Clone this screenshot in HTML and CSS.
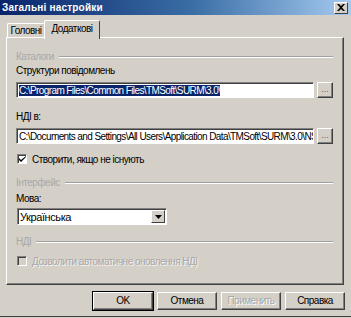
FILE: index.html
```html
<!DOCTYPE html>
<html>
<head>
  <meta charset="UTF-8">
  <title>Загальні настройки</title>
  <link rel="stylesheet" href="styles.css">
</head>
<body>
  <div class="window">
    <div class="titlebar">
      <span class="title">Загальні настройки</span>
      <span class="close">
        <svg width="8" height="7" viewBox="0 0 8 7"><path d="M0 0h2l2 2 2-2h2L5 3.5 8 7H6L4 5 2 7H0l3-3.5z" fill="#000"/></svg>
      </span>
    </div>

    <div class="tabs">
      <div class="tab">Головні</div>
      <div class="tab active">Додаткові</div>
    </div>

    <div class="panel">
      <div class="group">
        <span class="group-label">Каталоги</span>
        <span class="rule"></span>
      </div>

      <div class="label">Структури повідомлень</div>
      <div class="path-row">
        <div class="edit"><span class="selected">C:\Program Files\Common Files\TMSoft\SURM\3.0\</span></div>
        <div class="dots">...</div>
      </div>

      <div class="label label-nsi">НДІ в:</div>
      <div class="path-row">
        <div class="edit">C:\Documents and Settings\All Users\Application Data\TMSoft\SURM\3.0\NSI\</div>
        <div class="dots">...</div>
      </div>

      <label class="check check-create">
        <span class="box">
          <svg width="7" height="7" viewBox="0 0 7 7"><path d="M0 2v2l2 2 5-5V0L2 4z" fill="#000"/></svg>
        </span>
        Створити, якщо не існують
      </label>

      <div class="group group-interface">
        <span class="group-label">Інтерфейс</span>
        <span class="rule"></span>
      </div>

      <div class="label label-lang">Мова:</div>
      <div class="select">
        <span class="select-text">Українська</span>
        <span class="drop">
          <svg width="7" height="4" viewBox="0 0 7 4"><path d="M0 0h7L3.5 4z" fill="#000"/></svg>
        </span>
      </div>

      <div class="group group-nsi">
        <span class="group-label">НДІ</span>
        <span class="rule"></span>
      </div>

      <label class="check disabled">
        <span class="box"></span>
        Дозволити автоматичне оновлення НДІ
      </label>
    </div>

    <div class="buttons">
      <div class="btn default">OK</div>
      <div class="btn">Отмена</div>
      <div class="btn disabled">Применить</div>
      <div class="btn">Справка</div>
    </div>
  </div>
</body>
</html>
```

FILE: styles.css
```css
:root {
  --face: #d4d0c8;
  --shadow: #808080;
  --dark: #404040;
  --light: #ffffff;
  --grey-text: #a8a8a8;
}

body {
  margin: 0;
  padding: 0;
  background-color: var(--face);
  font-family: "Liberation Sans", Arial, sans-serif;
  font-size: 10px;
  letter-spacing: -0.5px;
  color: #000;
}

.window {
  width: 351px;
  height: 317px;
  box-sizing: border-box;
  background-color: var(--face);
  border-bottom: 1px solid var(--dark);
  overflow: hidden;
}

.titlebar {
  height: 15px;
  display: flex;
  align-items: center;
  justify-content: space-between;
  padding: 0 3px 0 2px;
  background: linear-gradient(to right, #0a246a 0%, #3a6ea5 55%, #a6caf0 100%);
}

.title {
  color: #fff;
  font-weight: bold;
  font-size: 10px;
  letter-spacing: 0.2px;
}

.close {
  width: 12px;
  height: 10px;
  display: flex;
  align-items: center;
  justify-content: center;
  background-color: var(--face);
  border: 1px solid;
  border-color: var(--light) var(--dark) var(--dark) var(--light);
}

.tabs {
  display: flex;
  align-items: flex-end;
  height: 22px;
  padding-left: 7px;
}

.tab {
  width: 38px;
  height: 14px;
  box-sizing: border-box;
  text-align: center;
  line-height: 13px;
  border: 1px solid;
  border-color: var(--light) var(--dark) transparent var(--light);
  border-bottom: none;
  border-radius: 2px 2px 0 0;
}

.tab.active {
  width: 56px;
  height: 19px;
  line-height: 15px;
  position: relative;
  z-index: 1;
  background-color: var(--face);
  margin-left: -1px;
  margin-bottom: -2px;
}

.panel {
  margin: 0 7px 0 6px;
  height: 248px;
  box-sizing: border-box;
  border: 1px solid;
  border-color: var(--light) var(--dark) var(--dark) var(--light);
  box-shadow: inset -1px -1px 0 var(--shadow);
  padding: 12px 10px 0 9px;
}

.group {
  display: flex;
  align-items: center;
  gap: 5px;
  height: 13px;
}

.group-label {
  color: var(--grey-text);
}

.rule {
  flex-grow: 1;
  height: 0;
  border-top: 1px solid #a0a0a0;
  border-bottom: 1px solid var(--light);
}

.label {
  margin-top: 1px;
  height: 14px;
  line-height: 14px;
}

.label-nsi {
  margin-top: 12px;
}

.label-lang {
  margin-top: 3px;
}

.path-row {
  display: flex;
  align-items: center;
  gap: 3px;
  margin-top: 4px;
}

.edit {
  width: 300px;
  height: 16px;
  box-sizing: border-box;
  background: #fff;
  border: 1px solid;
  border-color: var(--shadow) var(--light) var(--light) var(--shadow);
  box-shadow: inset 1px 1px 0 var(--dark);
  padding: 1px 2px 0 2px;
  line-height: 13px;
  letter-spacing: -0.6px;
  white-space: nowrap;
  overflow: hidden;
}

.selected {
  background-color: #0a246a;
  color: #fff;
}

.dots {
  width: 16px;
  height: 16px;
  box-sizing: border-box;
  border: 1px solid;
  border-color: var(--light) var(--dark) var(--dark) var(--light);
  box-shadow: inset -1px -1px 0 var(--shadow);
  text-align: center;
  line-height: 12px;
  font-size: 9px;
  letter-spacing: 0;
  color: #606060;
}

.check {
  display: flex;
  align-items: center;
  gap: 5px;
  height: 14px;
  padding-left: 1px;
}

.check-create {
  margin-top: 8px;
}

.box {
  width: 10px;
  height: 10px;
  box-sizing: border-box;
  background: #fff;
  border: 1px solid;
  border-color: var(--shadow) var(--light) var(--light) var(--shadow);
  box-shadow: inset 1px 1px 0 var(--dark);
  display: flex;
  align-items: center;
  justify-content: center;
}

.check.disabled {
  margin-top: 6px;
  color: var(--grey-text);
  text-shadow: 1px 1px 0 #f4f4f4;
}

.check.disabled .box {
  background: var(--face);
}

.group-interface {
  margin-top: 10px;
}

.select {
  width: 150px;
  height: 17px;
  box-sizing: border-box;
  display: flex;
  align-items: center;
  justify-content: space-between;
  background: #fff;
  border: 1px solid;
  border-color: var(--shadow) var(--light) var(--light) var(--shadow);
  box-shadow: inset 1px 1px 0 var(--dark);
  margin-top: 2px;
  margin-left: 1px;
  padding-left: 2px;
}

.select-text {
  font-size: 11px;
  letter-spacing: -0.4px;
}

.drop {
  width: 14px;
  height: 13px;
  box-sizing: border-box;
  margin-right: 1px;
  display: flex;
  align-items: center;
  justify-content: center;
  background-color: var(--face);
  border: 1px solid;
  border-color: var(--light) var(--dark) var(--dark) var(--light);
}

.group-nsi {
  margin-top: 10px;
}

.buttons {
  display: flex;
  justify-content: flex-end;
  gap: 4px;
  padding-right: 6px;
  margin-top: 7px;
}

.btn {
  width: 60px;
  height: 18px;
  box-sizing: border-box;
  text-align: center;
  line-height: 15px;
  border: 1px solid;
  border-color: var(--light) var(--dark) var(--dark) var(--light);
  box-shadow: inset -1px -1px 0 var(--shadow);
}

.btn.default {
  outline: 1px solid #000;
}

.btn.disabled {
  color: var(--grey-text);
  text-shadow: 1px 1px 0 #fff;
}
```
